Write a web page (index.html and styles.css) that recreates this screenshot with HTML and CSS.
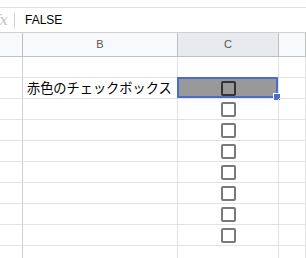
FILE: index.html
```html
<!DOCTYPE html>
<html lang="ja">
<head>
  <meta charset="UTF-8">
  <title>Sheet</title>
  <link rel="stylesheet" href="styles.css">
</head>
<body>
  <div class="toolbar"></div>
  <div class="formula-bar">
    <div class="fx">fx</div>
    <div class="formula">FALSE</div>
  </div>
  <div class="grid">
    <div class="row header">
      <div class="cell rh"></div>
      <div class="cell colb">B</div>
      <div class="cell colc selected-head">C</div>
      <div class="cell cold"></div>
    </div>
    <div class="row">
      <div class="cell rh"></div>
      <div class="cell colb"></div>
      <div class="cell colc"></div>
      <div class="cell cold"></div>
    </div>
    <div class="row">
      <div class="cell rh"></div>
      <div class="cell colb text">赤色のチェックボックス</div>
      <div class="cell colc active"><span class="checkbox dark"></span><div class="selection"><span class="handle"></span></div></div>
      <div class="cell cold"></div>
    </div>
    <div class="row">
      <div class="cell rh"></div>
      <div class="cell colb"></div>
      <div class="cell colc"><span class="checkbox"></span></div>
      <div class="cell cold"></div>
    </div>
    <div class="row">
      <div class="cell rh"></div>
      <div class="cell colb"></div>
      <div class="cell colc"><span class="checkbox"></span></div>
      <div class="cell cold"></div>
    </div>
    <div class="row">
      <div class="cell rh"></div>
      <div class="cell colb"></div>
      <div class="cell colc"><span class="checkbox"></span></div>
      <div class="cell cold"></div>
    </div>
    <div class="row">
      <div class="cell rh"></div>
      <div class="cell colb"></div>
      <div class="cell colc"><span class="checkbox"></span></div>
      <div class="cell cold"></div>
    </div>
    <div class="row">
      <div class="cell rh"></div>
      <div class="cell colb"></div>
      <div class="cell colc"><span class="checkbox"></span></div>
      <div class="cell cold"></div>
    </div>
    <div class="row">
      <div class="cell rh"></div>
      <div class="cell colb"></div>
      <div class="cell colc"><span class="checkbox"></span></div>
      <div class="cell cold"></div>
    </div>
    <div class="row">
      <div class="cell rh"></div>
      <div class="cell colb"></div>
      <div class="cell colc"><span class="checkbox"></span></div>
      <div class="cell cold"></div>
    </div>
    <div class="row">
      <div class="cell rh"></div>
      <div class="cell colb"></div>
      <div class="cell colc"></div>
      <div class="cell cold"></div>
    </div>
  </div>
</body>
</html>
```

FILE: styles.css
```css
body {
  margin: 0;
  background-color: #fff;
  font-family: "Liberation Sans", Arial, sans-serif;
  overflow: hidden;
}
.toolbar {
  height: 8px;
  box-sizing: border-box;
  border-bottom: 1px solid #e1e1e1;
}
.formula-bar {
  height: 25px;
  box-sizing: border-box;
  border-bottom: 1px solid #d0d0d0;
  display: flex;
  align-items: center;
}
.fx {
  width: 21px;
  margin-left: -6px;
  padding-right: 6px;
  box-sizing: border-box;
  text-align: right;
  height: 15px;
  line-height: 15px;
  border-right: 1px solid #d0d0d0;
  font-family: "DejaVu Serif", serif;
  font-style: italic;
  font-size: 15px;
  color: #c4c4c4;
}
.formula {
  margin-left: 10px;
  font-size: 12px;
  color: #000;
}
.row {
  display: flex;
  height: 21px;
}
.row.header {
  height: 24px;
}
.cell {
  box-sizing: border-box;
  border-right: 1px solid #e2e2e2;
  border-bottom: 1px solid #e2e2e2;
  position: relative;
}
.header .cell {
  background-color: #f8f9fa;
  border-right-color: #c0c0c0;
  border-bottom-color: #c0c0c0;
  font-size: 11px;
  color: #555;
  text-align: center;
  line-height: 23px;
}
.header .selected-head {
  background-color: #e8eaed;
}
.rh {
  width: 23px;
  border-right-color: #d0d0d0;
}
.colb {
  width: 155px;
}
.colc {
  width: 101px;
  display: flex;
  justify-content: center;
  align-items: center;
}
.cold {
  flex: 1;
}
.text {
  font-family: "Noto Sans CJK JP", sans-serif;
  font-size: 13.2px;
  line-height: 20px;
  padding-left: 4px;
  color: #000;
  white-space: nowrap;
}
.active {
  background-color: #999;
}
.checkbox {
  width: 15px;
  height: 15px;
  box-sizing: border-box;
  border: 2px solid #7a7a7a;
  border-radius: 2px;
  margin-left: 1px;
}
.checkbox.dark {
  border-color: #333;
}
.selection {
  position: absolute;
  top: -1px;
  left: -1px;
  right: 0;
  bottom: 0;
  border: 2px solid #4a6bd0;
}
.handle {
  position: absolute;
  right: -5px;
  bottom: -5px;
  width: 6px;
  height: 6px;
  background-color: #4a6bd0;
  border: 1px solid #fff;
}
```
